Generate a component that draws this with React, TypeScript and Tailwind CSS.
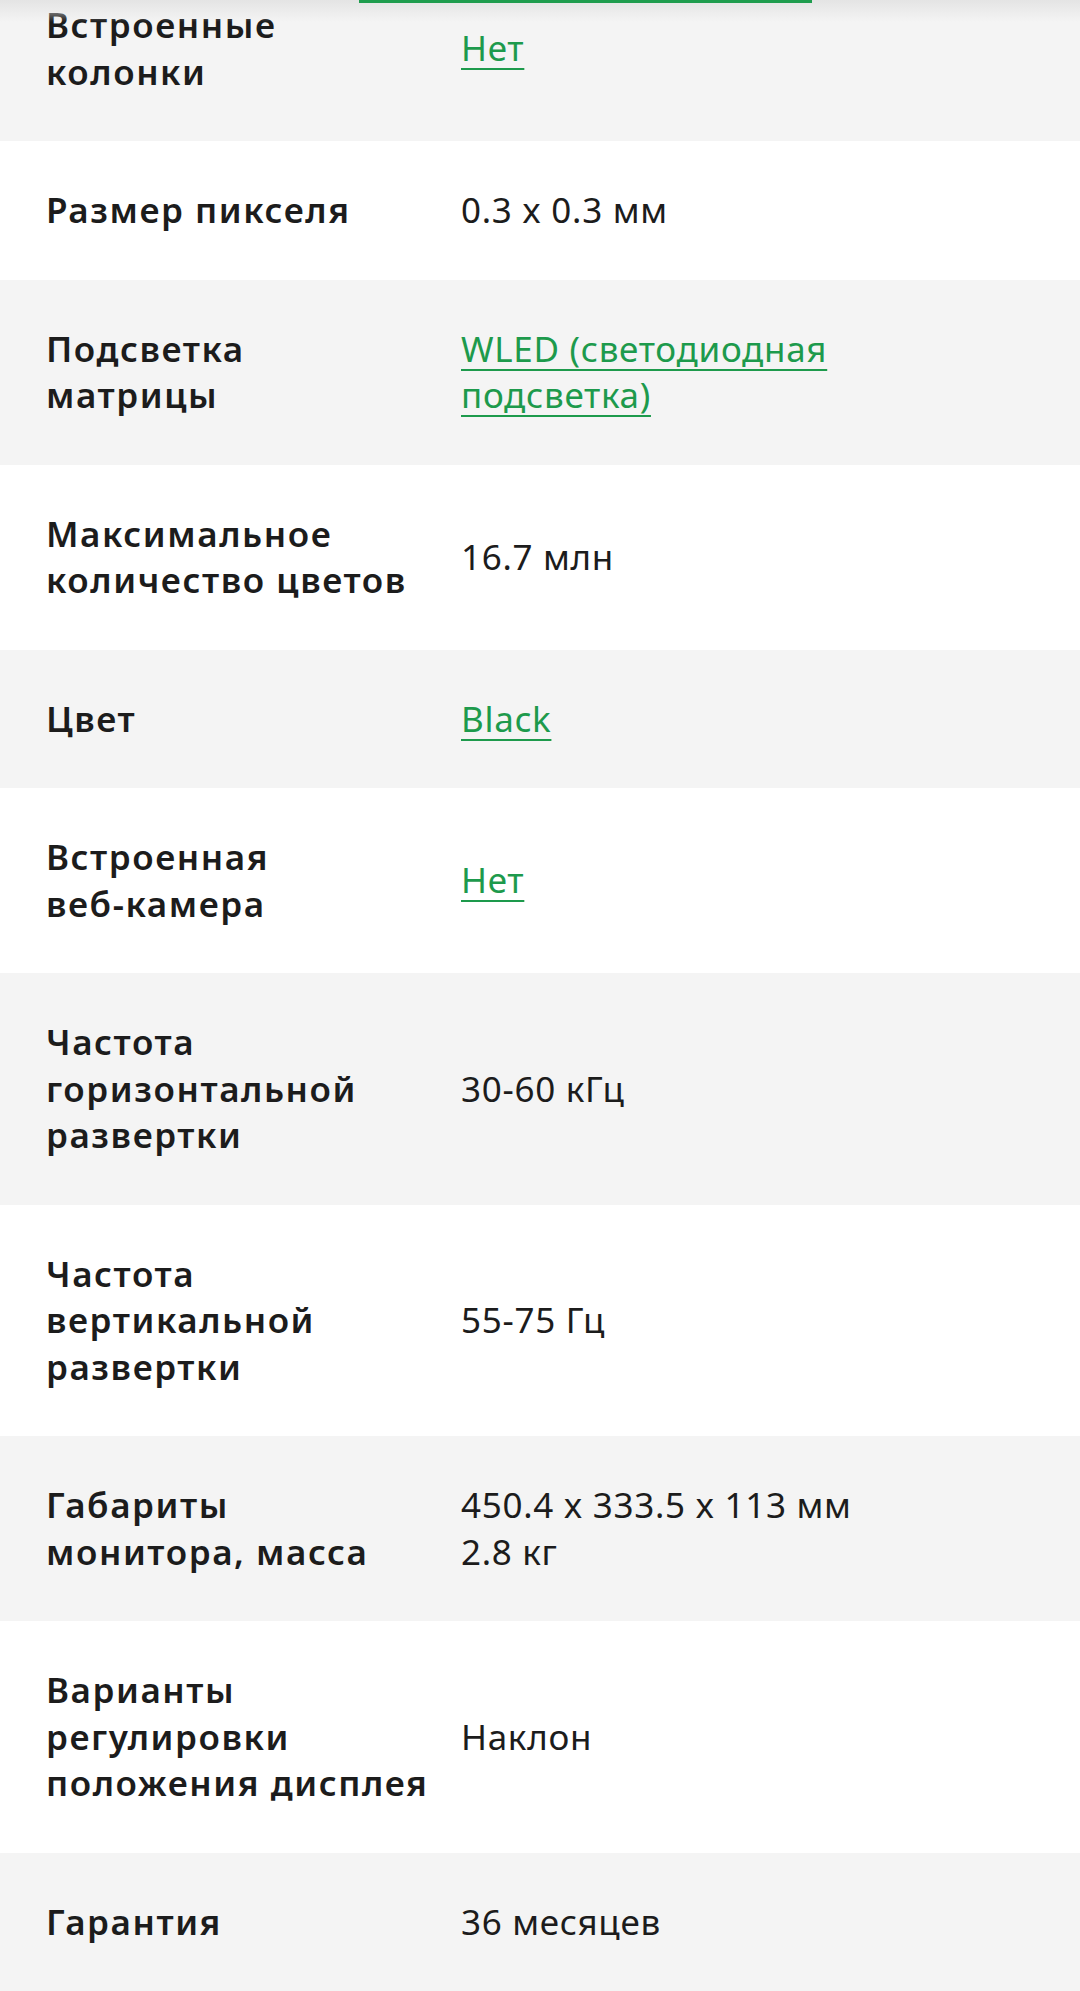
import React from 'react';

type Spec = {
  label: string[];
  value: string[];
  link?: boolean;
};

const specs: Spec[] = [
  { label: ['Встроенные', 'колонки'], value: ['Нет'], link: true },
  { label: ['Размер пикселя'], value: ['0.3 x 0.3 мм'] },
  { label: ['Подсветка', 'матрицы'], value: ['WLED (светодиодная', 'подсветка)'], link: true },
  { label: ['Максимальное', 'количество цветов'], value: ['16.7 млн'] },
  { label: ['Цвет'], value: ['Black'], link: true },
  { label: ['Встроенная', 'веб-камера'], value: ['Нет'], link: true },
  { label: ['Частота', 'горизонтальной', 'развертки'], value: ['30-60 кГц'] },
  { label: ['Частота', 'вертикальной', 'развертки'], value: ['55-75 Гц'] },
  { label: ['Габариты', 'монитора, масса'], value: ['450.4 x 333.5 x 113 мм', '2.8 кг'] },
  { label: ['Варианты', 'регулировки', 'положения дисплея'], value: ['Наклон'] },
  { label: ['Гарантия'], value: ['36 месяцев'] },
];

const Lines: React.FC<{ lines: string[] }> = ({ lines }) => (
  <>
    {lines.map((l, i) => (
      <span key={i} className="block">
        {l}
      </span>
    ))}
  </>
);

const SpecRow: React.FC<{ spec: Spec; odd: boolean }> = ({ spec, odd }) => (
  <div
    className={`grid grid-cols-[415px_1fr] items-center py-[46px] pl-[46px] leading-[46.5px] text-[35px] ${
      odd ? 'bg-[#f4f4f4]' : 'bg-white'
    }`}
  >
    <div className="font-semibold tracking-[0.045em] text-[#1c1c1c]">
      <Lines lines={spec.label} />
    </div>
    <div className="tracking-[0.02em] text-[#1c1c1c]">
      {spec.link ? (
        <a href="#" className="text-[#1d9a4c] underline decoration-2 underline-offset-[7px]">
          {spec.value.map((l, i) => (
            <React.Fragment key={i}>
              {i > 0 && <br />}
              {l}
            </React.Fragment>
          ))}
        </a>
      ) : (
        <Lines lines={spec.value} />
      )}
    </div>
  </div>
);

export default function App() {
  return (
    <div
      className="relative h-[1991px] w-[1080px] overflow-hidden bg-white"
      style={{ fontFamily: '"Noto Sans", "Open Sans", sans-serif' }}
    >
      <div className="-mt-[44px]">
        {specs.map((s, i) => (
          <SpecRow key={s.label.join(' ')} spec={s} odd={i % 2 === 0} />
        ))}
      </div>

      {/* sticky header edge */}
      <div className="absolute inset-x-0 top-0 h-[22px] bg-gradient-to-b from-[#e4e4e4] to-transparent" />
      <div className="absolute left-[359px] top-0 h-[3px] w-[453px] bg-[#1f9d4e]" />
    </div>
  );
}
